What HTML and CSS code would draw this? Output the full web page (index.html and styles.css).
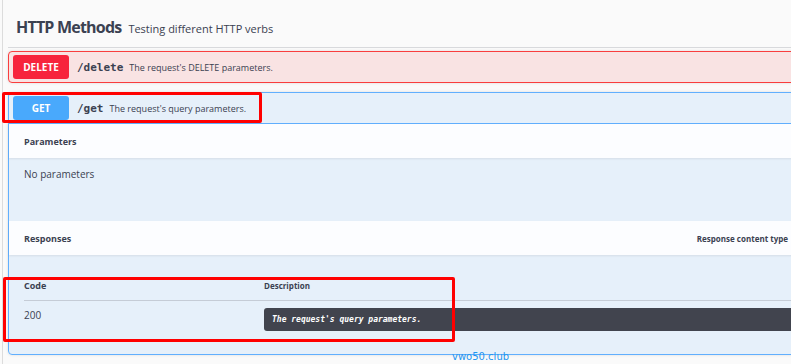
FILE: index.html
```html
<!DOCTYPE html>
<html lang="en">
<head>
<meta charset="UTF-8">
<meta name="viewport" content="width=device-width, initial-scale=1.0">
<title>HTTP Methods</title>
<link rel="stylesheet" href="styles.css">
</head>
<body>
    <div class="page">
        <div class="tag-section">
            <h3 class="tag-header">
                <span class="tag-name">HTTP Methods</span>
                <small class="tag-desc">Testing different HTTP verbs</small>
            </h3>

            <!-- DELETE operation (collapsed) -->
            <div class="opblock opblock-delete">
                <div class="opblock-summary">
                    <span class="method">DELETE</span>
                    <span class="path">/delete</span>
                    <span class="summary-desc">The request's DELETE parameters.</span>
                </div>
            </div>

            <!-- GET operation (expanded) -->
            <div class="opblock opblock-get">
                <div class="opblock-summary">
                    <span class="method">GET</span>
                    <span class="path">/get</span>
                    <span class="summary-desc">The request's query parameters.</span>
                </div>
                <div class="section-header">
                    <span class="section-title">Parameters</span>
                </div>
                <div class="section-body params-body">
                    <div class="no-params">No parameters</div>
                </div>
                <div class="section-header">
                    <span class="section-title">Responses</span>
                    <span class="content-type">Response content type</span>
                </div>
                <div class="section-body responses-body">
                    <table class="responses-table">
                        <thead>
                            <tr>
                                <th class="col-code">Code</th>
                                <th>Description</th>
                            </tr>
                        </thead>
                        <tbody>
                            <tr>
                                <td class="col-code">200</td>
                                <td><div class="markdown">The request's query parameters.</div></td>
                            </tr>
                        </tbody>
                    </table>
                </div>
            </div>
        </div>

        <!-- annotation marks drawn over the screenshot -->
        <div class="mark mark-get"></div>
        <div class="mark mark-table"></div>
        <div class="watermark">vwo50.club</div>
    </div>
</body>
</html>
```

FILE: styles.css
```css
body {
    margin: 0;
    padding: 0;
    background-color: #fafafa;
    font-family: "Open Sans", sans-serif;
    color: #3b4151;
    overflow: hidden;
}
.page {
    position: relative;
    margin-left: 2px;
    min-height: 364px;
    border-left: 1px solid #dcdcdc;
    padding-left: 5px;
}
.tag-section {
    width: 822px;
}
.tag-header {
    display: flex;
    align-items: baseline;
    margin: 0;
    padding: 16px 0 9px 8px;
    border-bottom: 1px solid #d8d9dc;
}
.tag-name {
    font-family: "Open Sans", sans-serif;
    font-size: 16px;
    font-weight: 700;
    letter-spacing: -0.8px;
}
.tag-desc {
    margin-left: 7px;
    font-size: 11px;
    font-weight: 400;
}

/* operation blocks */
.opblock {
    border: 1px solid;
    border-radius: 4px;
    margin-top: 3px;
    box-shadow: 0 0 3px rgba(0, 0, 0, 0.12);
}
.opblock-delete {
    background-color: rgba(249, 62, 62, 0.12);
    border-color: #f93e3e;
    margin-bottom: 9px;
}
.opblock-get {
    background-color: rgba(97, 175, 254, 0.13);
    border-color: #61affe;
}
.opblock-summary {
    display: flex;
    align-items: center;
    padding: 3px 4px;
}
.opblock-get .opblock-summary {
    border-bottom: 1px solid #61affe;
}
.method {
    width: 56px;
    height: 24px;
    line-height: 24px;
    border-radius: 3px;
    color: #fff;
    font-size: 10px;
    font-weight: 700;
    text-align: center;
}
.opblock-delete .method {
    background-color: #f7243c;
}
.opblock-get .method {
    background-color: #49a9fc;
}
.path {
    margin-left: 8px;
    font-family: "DejaVu Sans Mono", monospace;
    font-size: 11px;
    font-weight: 700;
}
.summary-desc {
    margin-left: 6px;
    font-size: 9px;
}

/* sections */
.section-header {
    display: flex;
    align-items: center;
    height: 34px;
    padding: 0 15px;
    background-color: rgba(255, 255, 255, 0.85);
    box-shadow: 0 1px 2px rgba(0, 0, 0, 0.08);
}
.section-title {
    font-size: 9px;
    font-weight: 700;
}
.content-type {
    margin-left: auto;
    font-size: 8px;
    font-weight: 700;
    padding-right: 26px;
}
.params-body {
    height: 63px;
    padding: 0 15px;
}
.no-params {
    padding-top: 9px;
    font-size: 10px;
}
.responses-body {
    height: 99px;
    padding: 24px 0 0 15px;
    box-sizing: border-box;
}
.responses-table {
    width: 100%;
    border-collapse: collapse;
}
.responses-table th {
    text-align: left;
    font-size: 8px;
    font-weight: 700;
    padding: 0 0 8px 0;
    border-bottom: 1px solid #c5ccd6;
}
.responses-table th:first-child {
    font-size: 9px;
}
.responses-table td {
    padding: 7px 0 0 0;
    vertical-align: top;
    font-size: 10px;
}
.col-code {
    width: 240px;
}
.markdown {
    background-color: #41444e;
    color: #fff;
    border-radius: 3px;
    height: 23px;
    line-height: 23px;
    padding-left: 8px;
    font-family: "DejaVu Sans Mono", monospace;
    font-style: italic;
    font-size: 8px;
    font-weight: 700;
}

/* red annotation boxes */
.mark {
    position: absolute;
    border: 3px solid #ff0000;
    border-radius: 2px;
}
.mark-get {
    left: -1px;
    top: 92px;
    width: 254px;
    height: 25px;
}
.mark-table {
    left: 0px;
    top: 277px;
    width: 446px;
    height: 59px;
}
.watermark {
    position: absolute;
    left: 449px;
    top: 351px;
    font-family: "DejaVu Sans", sans-serif;
    font-size: 10px;
    color: #1e95f0;
}
```
